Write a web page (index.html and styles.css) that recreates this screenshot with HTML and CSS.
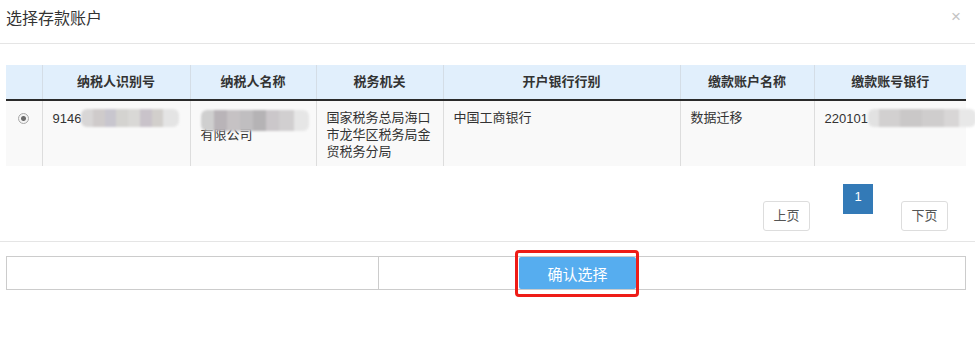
FILE: index.html
```html
<!DOCTYPE html>
<html lang="zh-CN">
<head>
    <meta charset="UTF-8">
    <title>选择存款账户</title>
    <link rel="stylesheet" href="styles.css">
</head>
<body>
    <div class="modal">
        <div class="modal-header">
            <h4 class="modal-title">选择存款账户</h4>
            <span class="close">×</span>
        </div>

        <div class="modal-body">
            <table class="account-table">
                <colgroup>
                    <col style="width: 36px">
                    <col style="width: 148px">
                    <col style="width: 126px">
                    <col style="width: 127px">
                    <col style="width: 237px">
                    <col style="width: 134px">
                    <col>
                </colgroup>
                <thead>
                    <tr>
                        <th></th>
                        <th>纳税人识别号</th>
                        <th>纳税人名称</th>
                        <th>税务机关</th>
                        <th>开户银行行别</th>
                        <th>缴款账户名称</th>
                        <th>缴款账号银行</th>
                    </tr>
                </thead>
                <tbody>
                    <tr>
                        <td class="radio-cell"><span class="radio"></span></td>
                        <td class="nowrap">9146<span class="mask mask-id"></span></td>
                        <td><span class="mask mask-name"></span><br>有限公司</td>
                        <td>国家税务总局海口市龙华区税务局金贸税务分局</td>
                        <td>中国工商银行</td>
                        <td>数据迁移</td>
                        <td class="nowrap">220101<span class="mask mask-acct"></span></td>
                    </tr>
                </tbody>
            </table>

            <div class="pager">
                <a class="page-btn page-prev">上页</a>
                <a class="page-num">1</a>
                <a class="page-btn page-next">下页</a>
            </div>
        </div>

        <div class="modal-footer">
            <div class="footer-row">
                <div class="footer-left"></div>
                <div class="footer-right">
                    <div class="btn-wrap">
                        <button class="btn-confirm">确认选择</button>
                        <span class="highlight"></span>
                    </div>
                </div>
            </div>
        </div>
    </div>
</body>
</html>
```

FILE: styles.css
```css
* {
    margin: 0;
    padding: 0;
    box-sizing: border-box;
}

body {
    background-color: #fff;
    color: #333;
    font-family: "Liberation Sans", "Noto Sans CJK SC", sans-serif;
    font-size: 13px;
}

.modal {
    width: 975px;
    min-height: 354px;
}

.modal-header {
    height: 44px;
    padding: 9px 6px 0;
    border-bottom: 1px solid #e5e5e5;
    display: flex;
    justify-content: space-between;
}

.modal-title {
    font-size: 16px;
    font-weight: normal;
    line-height: 20px;
    color: #333;
}

.close {
    font-size: 17px;
    line-height: 16px;
    color: #c4c4c4;
    margin-right: 8px;
}

.modal-body {
    padding: 21px 9px 0 6px;
}

.account-table {
    width: 960px;
    border-collapse: collapse;
    table-layout: fixed;
}

.account-table th {
    background-color: #e1effc;
    font-weight: bold;
    line-height: 17px;
    padding: 8px 10px 9px;
    text-align: center;
    border-left: 1px solid #d4dde6;
    border-bottom: 2px solid #2a2a2a;
}

.account-table th:first-child {
    border-left: none;
}

.account-table td {
    background-color: #f9f9f9;
    line-height: 17px;
    padding: 8px 10px 6px;
    vertical-align: top;
    border-left: 1px solid #ddd;
    color: #333;
}

.account-table td:first-child {
    border-left: none;
}

.account-table td.nowrap {
    white-space: nowrap;
    overflow: visible;
}

.radio-cell {
    text-align: center;
}

.radio {
    display: inline-block;
    width: 11px;
    height: 11px;
    margin-top: 4px;
    border: 1px solid #a8a8a8;
    border-radius: 50%;
    background: radial-gradient(circle, #6b6b6b 0 2px, #f4f4f4 3px);
}

.mask {
    display: inline-block;
    height: 18px;
    vertical-align: -4px;
    filter: blur(1px);
    border-radius: 6px;
}

.mask-id {
    width: 98px;
    background: linear-gradient(90deg, #d8d6d6 0 12%, #cfcbcb 12% 24%, #c8c6ce 24% 36%, #d4d3d0 36% 48%, #d9d8d6 48% 60%, #c9c3ca 60% 72%, #d2cfcc 72% 84%, #e4e4e4 84%);
}

.mask-name {
    width: 108px;
    height: 21px;
    margin-bottom: -5px;
    background: linear-gradient(90deg, #cfcfcf 0 12%, #b9b4b8 12% 24%, #c6c2c4 24% 36%, #c0bec0 36% 48%, #b5b3b5 48% 60%, #cbc7ca 60% 72%, #d1cfd0 72% 86%, #e6e6e6 86%);
}

.mask-acct {
    width: 108px;
    background: linear-gradient(90deg, #e2e2e2 0 10%, #d2d0d0 10% 30%, #cac8c8 30% 50%, #cfcdcd 50% 70%, #d8d6d6 70% 84%, #e8e8e8 84%);
}

.pager {
    display: flex;
    justify-content: flex-end;
    align-items: flex-start;
    padding: 18px 18px 0 0;
    height: 75px;
}

.page-btn {
    display: block;
    width: 47px;
    height: 30px;
    margin-top: 17px;
    border: 1px solid #ddd;
    border-radius: 3px;
    line-height: 28px;
    text-align: center;
    color: #555;
    font-size: 13px;
}

.page-num {
    display: block;
    width: 30px;
    height: 30px;
    margin: 0 28px 0 33px;
    background-color: #337ab7;
    color: #fff;
    line-height: 26px;
    text-align: center;
    font-size: 13px;
}

.modal-footer {
    border-top: 1px solid #e5e5e5;
    padding: 14px 9px 0 6px;
}

.footer-row {
    display: flex;
    width: 960px;
    height: 34px;
    border: 1px solid #ccc;
}

.footer-left {
    width: 372px;
    border-right: 1px solid #ccc;
}

.footer-right {
    flex: 1;
    padding-left: 140px;
}

.btn-wrap {
    position: relative;
    width: 117px;
}

.btn-confirm {
    display: block;
    width: 117px;
    height: 32px;
    border: none;
    border-radius: 2px;
    background-color: #56adef;
    color: #fff;
    font-family: "Liberation Sans", "Noto Sans CJK SC", sans-serif;
    font-size: 15px;
}

.highlight {
    position: absolute;
    z-index: 2;
    left: -4px;
    top: -7px;
    width: 124px;
    height: 47px;
    border: 3px solid #ee1c17;
    border-radius: 4px;
}
```
